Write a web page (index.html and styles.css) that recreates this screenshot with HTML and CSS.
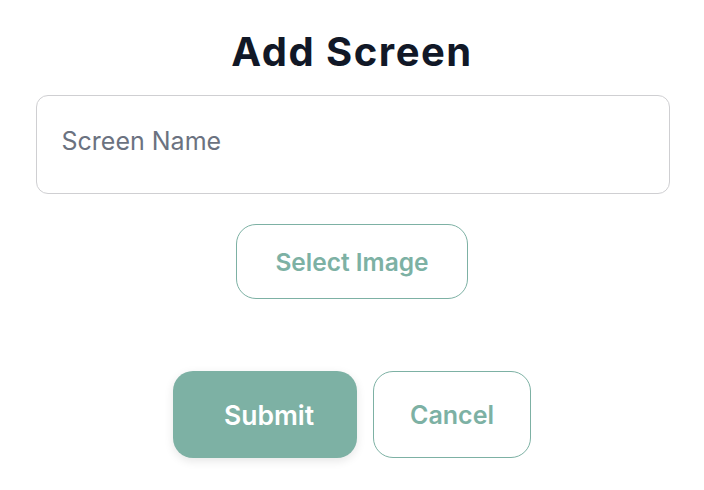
FILE: index.html
```html
<!DOCTYPE html>
<html lang="en">
<head>
<meta charset="utf-8">
<title>Add Screen</title>
<link rel="stylesheet" href="styles.css">
</head>
<body>
<main class="dialog">
  <h1 class="title">Add Screen</h1>
  <input class="name-input" type="text" placeholder="Screen Name">
  <button class="btn btn-outline btn-select" type="button">Select Image</button>
  <div class="actions">
    <button class="btn btn-primary" type="button">Submit</button>
    <button class="btn btn-outline btn-cancel" type="button">Cancel</button>
  </div>
</main>
</body>
</html>
```

FILE: styles.css
```css
html, body {
  margin: 0;
  padding: 0;
  background: #ffffff;
}

body {
  font-family: Inter, "Noto Sans", "Liberation Sans", sans-serif;
  width: 704px;
  height: 490px;
}

.dialog {
  display: flex;
  flex-direction: column;
  align-items: center;
  padding-top: 30px;
}

.title {
  margin: 0 0 21px;
  font-size: 40px;
  line-height: 44px;
  font-weight: 700;
  color: #111827;
  letter-spacing: 1.5px;
}

.name-input {
  box-sizing: border-box;
  width: 634px;
  height: 99px;
  margin: 0 0 30px 1px;
  padding: 0 25px 7px;
  border: 1px solid #cfcfd2;
  border-radius: 12px;
  font-family: inherit;
  font-size: 25px;
  color: #111827;
  background: #fff;
  outline: none;
}

.name-input::placeholder {
  color: #6b7280;
  opacity: 1;
}

.btn {
  box-sizing: border-box;
  font-family: inherit;
  font-weight: 600;
  cursor: pointer;
  border-radius: 20px;
  padding: 0;
}

.btn-outline {
  background: #ffffff;
  border: 1px solid #7db1a4;
  color: #7db1a4;
}

.btn-select {
  width: 232px;
  height: 75px;
  font-size: 24.5px;
  margin-bottom: 72px;
}

.actions {
  display: flex;
  gap: 16px;
}

.btn-primary {
  width: 184px;
  height: 87px;
  border: none;
  padding-left: 8px;
  background: #7db1a4;
  color: #ffffff;
  font-size: 26.5px;
  box-shadow: 0 3px 10px rgba(0, 0, 0, 0.10);
}

.btn-cancel {
  width: 158px;
  height: 87px;
  font-size: 25px;
}
```
